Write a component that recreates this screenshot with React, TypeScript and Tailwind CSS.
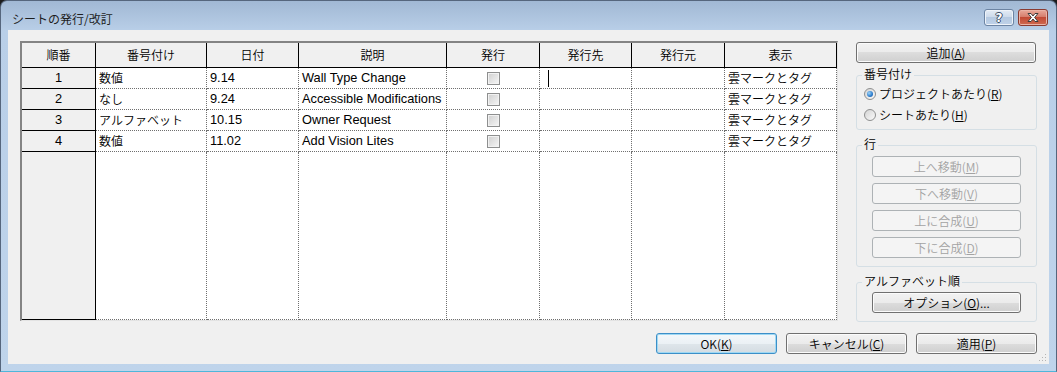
const jp = "font-['Noto_Sans_CJK_JP',sans-serif] font-[350] text-[12px] leading-[14px]";
const latin = "font-['Liberation_Sans','Noto_Sans_CJK_JP',sans-serif] text-[12.8px] leading-[14px]";

const colWidths = ['w-[74px]', 'w-[111px]', 'w-[92px]', 'w-[148px]', 'w-[93px]', 'w-[92px]', 'w-[93px]', 'w-[112px]'];
const headers = ['順番', '番号付け', '日付', '説明', '発行', '発行先', '発行元', '表示'];

const rows = [
    { n: '1', type: '数値', date: '9.14', desc: 'Wall Type Change' },
    { n: '2', type: 'なし', date: '9.24', desc: 'Accessible Modifications' },
    { n: '3', type: 'アルファベット', date: '10.15', desc: 'Owner Request' },
    { n: '4', type: '数値', date: '11.02', desc: 'Add Vision Lites' },
];

const dotted = 'border-r border-b border-dotted border-[#6f6f6f] bg-white';
const grayCell = 'border-r border-b border-black bg-[#f0f0f0]';

function Checkbox() {
    return (
        <div className="w-[13px] h-[13px] border border-[#8e8f8f] bg-[linear-gradient(135deg,#cfcfcf,#f6f6f6)] shadow-[inset_0_0_0_1px_#f2f2f2]" />
    );
}

function Key({ k }: { k: string }) {
    return <span className="underline underline-offset-[1px]">{k}</span>;
}

type BtnProps = {
    children: React.ReactNode;
    className?: string;
    variant?: 'normal' | 'default' | 'disabled';
};

function WinButton({ children, className = '', variant = 'normal' }: BtnProps) {
    const look =
        variant === 'disabled'
            ? 'border-[#adb2b5] bg-[#f4f4f4] text-[#a3a3a3]'
            : variant === 'default'
              ? 'border-[#3c8fc8] bg-[linear-gradient(to_bottom,#f3f7fa_0%,#ebf1f5_50%,#dfe6eb_50%,#d4dce2_100%)] shadow-[inset_0_0_0_1px_#9fd8f3] text-black'
              : 'border-[#707070] bg-[linear-gradient(to_bottom,#f2f2f2_0%,#ebebeb_50%,#dddddd_50%,#cfcfcf_100%)] shadow-[inset_0_0_0_1px_#fbfbfb] text-black';
    return (
        <div className={`flex items-center justify-center h-[21px] rounded-[3px] border ${look} ${jp} ${className}`}>
            {children}
        </div>
    );
}

function Radio({ checked, children }: { checked?: boolean; children: React.ReactNode }) {
    return (
        <div className="flex items-center h-[21px] pl-[7px] gap-[3px]">
            <div className="w-[12px] h-[12px] rounded-full border border-[#8e8f8f] bg-[linear-gradient(135deg,#d4d4d4,#fafafa)] flex items-center justify-center">
                {checked && (
                    <div className="w-[6px] h-[6px] rounded-full bg-[radial-gradient(circle_at_35%_35%,#9fd4f8,#2a7ccd_60%,#1a4f92)]" />
                )}
            </div>
            <span className={`${jp} text-black`}>{children}</span>
        </div>
    );
}

function GroupBox({ title, className, children }: { title: string; className: string; children: React.ReactNode }) {
    return (
        <div className={`relative rounded-[3px] border border-[#d5dfe5] ${className}`}>
            <span className={`absolute -top-[9px] left-[5px] px-[2px] bg-[#f0f0f0] text-black ${jp}`}>{title}</span>
            {children}
        </div>
    );
}

function RevisionTable() {
    return (
        <div className="w-[818px] h-[280px] flex flex-col border-l-2 border-t-2 border-[#848484] border-r border-b border-r-[#e3e3e3] border-b-[#e3e3e3] bg-white">
            <div className="flex h-[25px]">
                {headers.map((h, i) => (
                    <div key={h} className={`${colWidths[i]} ${grayCell} flex items-center justify-center text-black ${jp}`}>
                        {h}
                    </div>
                ))}
            </div>
            {rows.map((r) => (
                <div key={r.n} className="flex h-[21px] text-black">
                    <div className={`${colWidths[0]} ${grayCell} flex items-center justify-center ${latin}`}>{r.n}</div>
                    <div className={`${colWidths[1]} ${dotted} flex items-center pl-[3px] ${jp}`}>{r.type}</div>
                    <div className={`${colWidths[2]} ${dotted} flex items-center pl-[3px] ${latin}`}>{r.date}</div>
                    <div className={`${colWidths[3]} ${dotted} flex items-center pl-[3px] whitespace-nowrap ${latin}`}>{r.desc}</div>
                    <div className={`${colWidths[4]} ${dotted} flex items-center justify-center`}>
                        <Checkbox />
                    </div>
                    <div className={`${colWidths[5]} ${dotted} flex items-center pl-[8px]`}>
                        {r.n === '1' && <div className="w-px h-[17px] bg-black" />}
                    </div>
                    <div className={`${colWidths[6]} ${dotted}`} />
                    <div className={`${colWidths[7]} ${dotted} flex items-center pl-[3px] ${jp}`}>雲マークとタグ</div>
                </div>
            ))}
            <div className="flex flex-1">
                {colWidths.map((w, i) => (
                    <div key={w + i} className={`${w} ${i === 0 ? grayCell : dotted}`} />
                ))}
            </div>
        </div>
    );
}

function SidePanel() {
    return (
        <div className="w-[181px] ml-[18px] pt-[1px] flex flex-col">
            <WinButton className="w-[180px]">
                追加(<Key k="A" />)
            </WinButton>
            <GroupBox title="番号付け" className="mt-[12px] h-[55px] pt-[7px]">
                <Radio checked>
                    プロジェクトあたり(<Key k="R" />)
                </Radio>
                <Radio>
                    シートあたり(<Key k="H" />)
                </Radio>
            </GroupBox>
            <GroupBox title="行" className="mt-[15px] h-[122px] pt-[10px] flex flex-col gap-[6px]">
                <WinButton variant="disabled" className="ml-[15px] w-[149px]">
                    上へ移動(<Key k="M" />)
                </WinButton>
                <WinButton variant="disabled" className="ml-[15px] w-[149px]">
                    下へ移動(<Key k="V" />)
                </WinButton>
                <WinButton variant="disabled" className="ml-[15px] w-[149px]">
                    上に合成(<Key k="U" />)
                </WinButton>
                <WinButton variant="disabled" className="ml-[15px] w-[149px]">
                    下に合成(<Key k="D" />)
                </WinButton>
            </GroupBox>
            <GroupBox title="アルファベット順" className="mt-[15px] h-[40px] pt-[9px]">
                <WinButton className="ml-[15px] w-[149px]">
                    オプション(<Key k="O" />)...
                </WinButton>
            </GroupBox>
        </div>
    );
}

function TitleBar() {
    return (
        <div className="h-[29px] flex items-start pl-[11px] pr-[8px]">
            <span className="mt-[11px] font-['Noto_Sans_CJK_JP',sans-serif] text-[12px] leading-[14px] text-[#1e1e1e]">
                シートの発行/改訂
            </span>
            <div className="ml-auto mt-[8px] flex gap-[4px]">
                <div className="w-[30px] h-[17px] rounded-[3px] border border-[#6c84a3] bg-[linear-gradient(to_bottom,#e4ecf5_0%,#cbd9ea_50%,#b5c9e1_50%,#bfd2e9_100%)] shadow-[inset_0_0_0_1px_#eef3f9] flex items-center justify-center">
                    <span className="font-['DejaVu_Sans',sans-serif] font-bold text-[12px] leading-[12px] text-white [text-shadow:1px_0_#3b4c64,-1px_0_#3b4c64,0_1px_#3b4c64,0_-1px_#3b4c64]">
                        ?
                    </span>
                </div>
                <div className="w-[30px] h-[17px] rounded-[3px] border border-[#8a3b31] bg-[linear-gradient(to_bottom,#e9a99a_0%,#d47968_50%,#c24a35_50%,#cf6a50_100%)] shadow-[inset_0_0_0_1px_#eab3a6] flex items-center justify-center">
                    <svg width="14" height="11" viewBox="0 0 14 11">
                        <path
                            d="M2 1.5 L5 1.5 L7 4 L9 1.5 L12 1.5 L8.6 5.5 L12 9.5 L9 9.5 L7 7 L5 9.5 L2 9.5 L5.4 5.5 Z"
                            fill="#ffffff"
                            stroke="#3c3c3c"
                            strokeWidth="1"
                            strokeLinejoin="round"
                        />
                    </svg>
                </div>
            </div>
        </div>
    );
}

export default function App() {
    return (
        <div className="w-[1057px] h-[372px] bg-[#1c1c1c] overflow-hidden">
            <div className="w-full h-full flex flex-col rounded-t-[7px] border border-[#56667d] border-b-[#4fb6da] bg-[linear-gradient(to_bottom,#a1b8d4_0px,#b9cfe8_30px,#bfd4eb_372px)]">
                <TitleBar />
                <div className="relative mx-[7px] h-[334px] bg-[#f0f0f0] pt-[11px] pl-[12px] pr-[12px] flex flex-col">
                    <div className="flex h-[281px] items-start">
                        <RevisionTable />
                        <SidePanel />
                    </div>
                    <div className="mt-[11px] flex justify-end gap-[9px]">
                        <WinButton variant="default" className="w-[121px]">
                            OK(<Key k="K" />)
                        </WinButton>
                        <WinButton className="w-[121px]">
                            キャンセル(<Key k="C" />)
                        </WinButton>
                        <WinButton className="w-[121px]">
                            適用(<Key k="P" />)
                        </WinButton>
                    </div>
                    <svg className="absolute right-[2px] bottom-[2px]" width="8" height="8" viewBox="0 0 8 8">
                        <rect x="6" y="0" width="1" height="1" fill="#b4b4b4" />
                        <rect x="3" y="3" width="1" height="1" fill="#b4b4b4" />
                        <rect x="6" y="3" width="1" height="1" fill="#b4b4b4" />
                        <rect x="0" y="6" width="1" height="1" fill="#b4b4b4" />
                        <rect x="3" y="6" width="1" height="1" fill="#b4b4b4" />
                        <rect x="6" y="6" width="1" height="1" fill="#b4b4b4" />
                    </svg>
                </div>
                <div className="flex-1" />
            </div>
        </div>
    );
}
